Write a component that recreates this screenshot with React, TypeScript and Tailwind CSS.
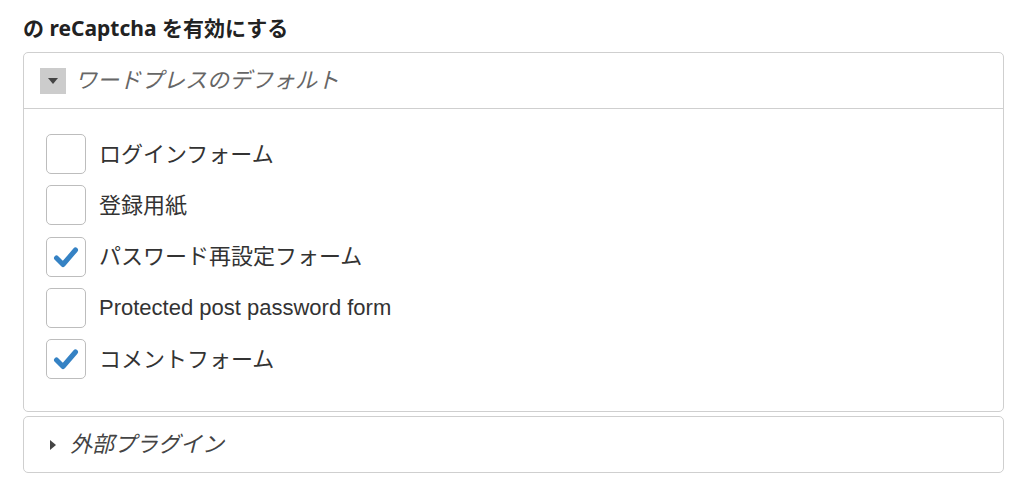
import React from 'react';

const FONT = "font-['Liberation_Sans','Noto_Sans_CJK_JP',sans-serif]";

const items = [
  { label: 'ログインフォーム', checked: false },
  { label: '登録用紙', checked: false },
  { label: 'パスワード再設定フォーム', checked: true },
  { label: 'Protected post password form', checked: false },
  { label: 'コメントフォーム', checked: true },
];

const Checkbox: React.FC<{ checked: boolean }> = ({ checked }) => (
  <span className="flex h-[40px] w-[40px] shrink-0 items-center justify-center rounded-[5px] border border-[#bdbdbd] bg-white">
    {checked && (
      <svg width="26" height="22" viewBox="0 0 26 22">
        <path d="M3.5 12 L10 18.5 L22.5 4" fill="none" stroke="#3582c4" strokeWidth="5" strokeLinecap="round" strokeLinejoin="round" />
      </svg>
    )}
  </span>
);

export default function App() {
  return (
    <div className={`min-h-[480px] w-[1024px] bg-white px-[23px] pt-[14px] ${FONT}`}>
      <h2 className="mb-[9px] font-['Noto_Sans','Noto_Sans_CJK_JP',sans-serif] text-[21px] leading-[29px] font-bold text-[#222]">
        の reCaptcha を有効にする
      </h2>

      <div className="w-[981px] rounded-[5px] border border-[#cfcfcf]">
        <div className="flex h-[56px] items-center gap-[9px] border-b border-[#cfcfcf] pl-[16px]">
          <span className="flex h-[26px] w-[26px] items-center justify-center bg-[#cccccc]">
            <svg width="10" height="6" viewBox="0 0 10 6">
              <path d="M0 0 H10 L5 6 Z" fill="#444" />
            </svg>
          </span>
          <span className="text-[22px] italic text-[#666]">ワードプレスのデフォルト</span>
        </div>

        <div className="flex flex-col gap-[11.3px] pt-[25px] pb-[32px] pl-[22px]">
          {items.map((item) => (
            <label key={item.label} className="flex items-center gap-[13px]">
              <Checkbox checked={item.checked} />
              <span className="text-[22px] text-[#333]">{item.label}</span>
            </label>
          ))}
        </div>
      </div>

      <div className="mt-[4px] flex h-[57px] w-[981px] items-center gap-[14px] rounded-[5px] border border-[#cfcfcf] pl-[26px]">
        <svg width="6" height="10" viewBox="0 0 6 10">
          <path d="M0 0 L6 5 L0 10 Z" fill="#444" />
        </svg>
        <span className="text-[22px] italic text-[#444]">外部プラグイン</span>
      </div>
    </div>
  );
}
